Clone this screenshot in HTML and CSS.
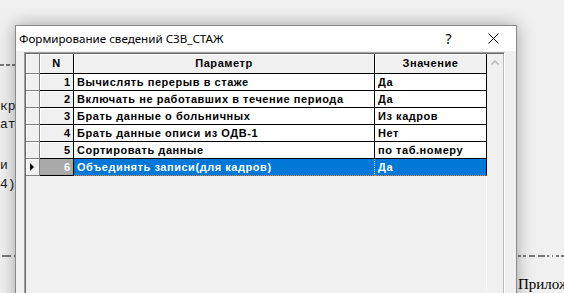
FILE: index.html
```html
<!DOCTYPE html>
<html lang="ru">
<head>
<meta charset="utf-8">
<title>Формирование сведений СЗВ_СТАЖ</title>
<link rel="stylesheet" href="styles.css">
</head>
<body>
<div class="desk">
  <svg class="dash dash-l1" width="16" height="2" viewBox="0 0 16 2"><path d="M0 1H4M6 1H10M12 1H15" stroke="#000" stroke-width="1"/></svg>
  <span class="doc-text t1">кр</span>
  <span class="doc-text t2">ат:</span>
  <span class="doc-text t3">и :</span>
  <span class="doc-text t4">4)</span>
  <svg class="dash dash-l2" width="16" height="2" viewBox="0 0 16 2"><path d="M2 1H11M14 1H15" stroke="#000" stroke-width="1"/></svg>
  <svg class="dash dash-r" width="46" height="2" viewBox="0 0 46 2"><path d="M0 1H3M5 1H8M11 1H17M20 1H27M29 1H31M34 1H35M38 1H41M43 1H46" stroke="#000" stroke-width="1"/></svg>
  <span class="doc-serif">Прилож</span>

  <div class="dialog">
    <div class="titlebar">
      <span class="title">Формирование сведений СЗВ_СТАЖ</span>
      <span class="capbtn help">?</span>
      <span class="capbtn close"><svg width="11" height="11" viewBox="0 0 11 11"><path d="M0.5 0.5L10.5 10.5M10.5 0.5L0.5 10.5" stroke="#000" stroke-width="1"/></svg></span>
    </div>
    <div class="client">
      <div class="grid">
        <div class="grid-inner">
          <div class="table">
            <div class="rows">
              <div class="cell hdr ind"></div>
              <div class="cell hdr">N</div>
              <div class="cell hdr">Параметр</div>
              <div class="cell hdr">Значение</div>

              <div class="cell ind"></div>
              <div class="cell num">1</div>
              <div class="cell txt">Вычислять перерыв в стаже</div>
              <div class="cell txt">Да</div>

              <div class="cell ind"></div>
              <div class="cell num">2</div>
              <div class="cell txt">Включать не работавших в течение периода</div>
              <div class="cell txt">Да</div>

              <div class="cell ind"></div>
              <div class="cell num">3</div>
              <div class="cell txt">Брать данные о больничных</div>
              <div class="cell txt">Из кадров</div>

              <div class="cell ind"></div>
              <div class="cell num">4</div>
              <div class="cell txt">Брать данные описи из ОДВ-1</div>
              <div class="cell txt">Нет</div>

              <div class="cell ind"></div>
              <div class="cell num">5</div>
              <div class="cell txt">Сортировать данные</div>
              <div class="cell txt">по таб.номеру</div>

              <div class="cell ind cur"><span class="arrow"></span></div>
              <div class="cell num sel">6</div>
              <div class="cell txt hl">Объединять записи(для кадров)</div>
              <div class="cell txt hl last">Да</div>
            </div>
            <div class="filler"></div>
          </div>
          <div class="vscroll">
            <div class="upbtn"><svg width="16" height="17" viewBox="0 0 16 17"><path d="M4.5 10.5L8 7L11.5 10.5" fill="none" stroke="#b4b4b4" stroke-width="1.4"/></svg></div>
          </div>
        </div>
      </div>
    </div>
  </div>
</div>
</body>
</html>
```

FILE: styles.css
```css
html, body {
  margin: 0;
  padding: 0;
}
body {
  width: 564px;
  height: 293px;
  overflow: hidden;
  background: #f0f0f0;
  font-family: "Liberation Sans", Arial, sans-serif;
}
.desk {
  position: relative;
  width: 564px;
  height: 293px;
  overflow: hidden;
  background: #f0f0f0;
}
.doc-text {
  position: absolute;
  left: 0;
  font-family: "Liberation Mono", "Courier New", monospace;
  font-size: 13px;
  line-height: 13px;
  color: #1a1a1a;
}
.t1 { top: 100px; }
.t2 { top: 118px; }
.t3 { top: 159px; }
.t4 { top: 178px; }
.dash {
  position: absolute;
  display: block;
}
.dash-l1 { left: 0; top: 64px; }
.dash-l2 { left: 0; top: 255px; }
.dash-r { left: 518px; top: 255px; }
.doc-serif {
  position: absolute;
  left: 518px;
  top: 277px;
  width: 46px;
  overflow: hidden;
  white-space: nowrap;
  font-family: "Liberation Serif", "Times New Roman", serif;
  font-size: 15px;
  line-height: 15px;
  color: #000;
}

.dialog {
  position: absolute;
  left: 15px;
  top: 25px;
  width: 502px;
  height: 290px;
  box-sizing: border-box;
  border: 1px solid #8a8a8a;
  background: #f0f0f0;
  box-shadow: 0 0 16px rgba(0, 0, 0, 0.33);
  display: flex;
  flex-direction: column;
}
.titlebar {
  height: 25px;
  flex: none;
  background: #fff;
  display: flex;
  align-items: center;
  padding-left: 3px;
  font-family: "Noto Sans", "Open Sans", sans-serif;
  font-size: 11.6px;
  color: #000;
}
.title {
  flex: 1;
  white-space: nowrap;
}
.capbtn {
  width: 46px;
  height: 25px;
  display: flex;
  align-items: center;
  justify-content: center;
}
.help {
  font-size: 14px;
  padding-left: 3px;
  box-sizing: border-box;
}
.close svg {
  display: block;
}
.client {
  flex: 1;
  display: flex;
  padding: 1px 11px 0 8px;
  min-height: 0;
}
.grid {
  width: 481px;
  box-sizing: border-box;
  border-left: 1px solid #a0a0a0;
  border-top: 1px solid #a0a0a0;
  border-right: 1px solid #fff;
  display: flex;
}
.grid-inner {
  flex: 1;
  border-left: 1px solid #696969;
  border-top: 1px solid #696969;
  display: flex;
  background: #f0f0f0;
}
.table {
  width: 461px;
  display: flex;
  flex-direction: column;
}
.rows {
  display: grid;
  grid-template-columns: 14px 34px 301px 112px;
  grid-template-rows: 20px repeat(6, 17px);
}
.cell {
  box-sizing: border-box;
  border-right: 1px solid #000;
  border-bottom: 1px solid #000;
  font-family: "Liberation Sans", Arial, sans-serif;
  font-size: 11px;
  font-weight: bold;
  letter-spacing: 0.55px;
  line-height: 16px;
  white-space: nowrap;
  overflow: hidden;
  color: #000;
}
.hdr {
  background: #f0f0f0;
  text-align: center;
  line-height: 19px;
  box-shadow: inset 1px 1px 0 #fff;
}
.ind {
  background: #f0f0f0;
  border-right-color: #808080;
  border-bottom-color: #808080;
  box-shadow: inset 1px 1px 0 #fff;
  display: flex;
  align-items: center;
}
.num {
  background: #f0f0f0;
  text-align: right;
  padding-right: 3px;
  letter-spacing: 0;
  box-shadow: inset 1px 1px 0 #fff;
}
.txt {
  background: #fff;
  padding-left: 3px;
}
.arrow {
  display: block;
  width: 0;
  height: 0;
  margin-left: 4px;
  border-left: 4px solid #000;
  border-top: 4px solid transparent;
  border-bottom: 4px solid transparent;
}
.num.sel {
  background: #a9a9a9;
  color: #fff;
  box-shadow: none;
}
.txt.hl {
  background: #0078d7;
  color: #fff;
  border-bottom: 1px dotted #e8872a;
  border-right: 1px dotted #f3c48a;
}
.txt.hl.last {
  border-right: 1px solid #000;
}
.filler {
  flex: 1;
  border-right: 1px solid #fff;
}
.vscroll {
  width: 17px;
  box-sizing: border-box;
  border-right: 1px solid #b9b9b9;
  background: #f0f0f0;
}
.upbtn svg {
  display: block;
}
```
